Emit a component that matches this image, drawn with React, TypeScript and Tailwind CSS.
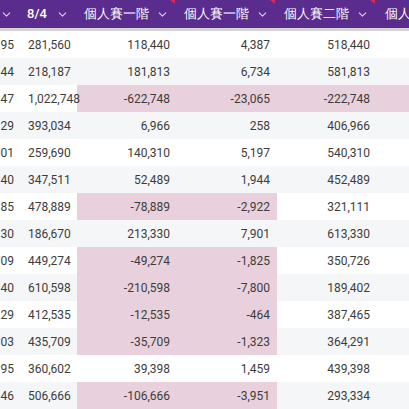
import React from 'react';
import { ChevronDown } from 'lucide-react';

type Row = { a: string; b: string; c: string; d: string; e: string; f: string; pink: number };

// pink: 0 none, 2 = cols c,d ; 4 = cols c,d,e,f
const rows: Row[] = [
  { a: '95', b: '281,560', c: '118,440', d: '4,387', e: '518,440', f: '', pink: 0 },
  { a: '44', b: '218,187', c: '181,813', d: '6,734', e: '581,813', f: '', pink: 0 },
  { a: '47', b: '1,022,748', c: '-622,748', d: '-23,065', e: '-222,748', f: '', pink: 4 },
  { a: '29', b: '393,034', c: '6,966', d: '258', e: '406,966', f: '', pink: 0 },
  { a: '01', b: '259,690', c: '140,310', d: '5,197', e: '540,310', f: '', pink: 0 },
  { a: '40', b: '347,511', c: '52,489', d: '1,944', e: '452,489', f: '', pink: 0 },
  { a: '85', b: '478,889', c: '-78,889', d: '-2,922', e: '321,111', f: '', pink: 2 },
  { a: '30', b: '186,670', c: '213,330', d: '7,901', e: '613,330', f: '', pink: 0 },
  { a: '09', b: '449,274', c: '-49,274', d: '-1,825', e: '350,726', f: '', pink: 2 },
  { a: '40', b: '610,598', c: '-210,598', d: '-7,800', e: '189,402', f: '', pink: 2 },
  { a: '29', b: '412,535', c: '-12,535', d: '-464', e: '387,465', f: '', pink: 2 },
  { a: '03', b: '435,709', c: '-35,709', d: '-1,323', e: '364,291', f: '', pink: 2 },
  { a: '95', b: '360,602', c: '39,398', d: '1,459', e: '439,398', f: '', pink: 0 },
  { a: '46', b: '506,666', c: '-106,666', d: '-3,951', e: '293,334', f: '', pink: 2 },
];

const HeadCell = ({ label, w, marker }: { label: string; w: string; marker?: boolean }) => (
  <div className={`relative flex items-center justify-between shrink-0 h-full pl-[7px] pr-[8px] ${w}`}>
    <span className="whitespace-nowrap">{label}</span>
    <ChevronDown size={13} strokeWidth={2} className="text-[#d9d0e8]" />
    {marker && (
      <div className="absolute right-[2px] top-0 w-0 h-0 border-l-[5px] border-l-transparent border-t-[4px] border-t-[#e0245e]" />
    )}
  </div>
);

const App = () => {
  return (
    <div className="w-[409px] h-[409px] overflow-hidden bg-white font-['Roboto',sans-serif] text-[12px]">
      <div className="flex h-[28px] bg-[#5a2c8e] text-white text-[13px] font-medium">
        <div className="w-[20px] shrink-0 flex items-center pl-[0px]">
          <ChevronDown size={13} strokeWidth={2} className="text-[#d9d0e8]" />
        </div>
        <HeadCell label="8/4" w="w-[57px]" />
        <HeadCell label="個人賽一階" w="w-[100px]" marker />
        <HeadCell label="個人賽一階" w="w-[100px]" marker />
        <HeadCell label="個人賽二階" w="w-[100px]" marker />
        <div className="flex-1 min-w-0 flex items-center pl-[8px] whitespace-nowrap overflow-hidden">個人</div>
      </div>
      <div className="h-[3px] bg-[#d4d4d6]" />
      {rows.map((r, i) => {
        const stripe = i % 2 === 0 ? 'bg-white' : 'bg-[#f5f6f8]';
        const p1 = r.pink >= 2 ? 'bg-[#e8d1dc]' : '';
        const p2 = r.pink >= 4 ? 'bg-[#e8d1dc]' : '';
        return (
          <div key={i} className={`flex h-[27px] items-center text-[#3c3c3c] ${stripe}`}>
            <div className="w-[20px] shrink-0 text-right pr-[6px] h-full flex items-center justify-end overflow-visible">{r.a}</div>
            <div className="w-[57px] shrink-0 pl-[8px] h-full flex items-center whitespace-nowrap overflow-visible relative z-10">{r.b}</div>
            <div className={`w-[100px] shrink-0 h-full flex items-center justify-end pr-[7px] ${p1}`}>{r.c}</div>
            <div className={`w-[100px] shrink-0 h-full flex items-center justify-end pr-[7px] ${p1}`}>{r.d}</div>
            <div className={`w-[100px] shrink-0 h-full flex items-center justify-end pr-[7px] ${p2}`}>{r.e}</div>
            <div className={`flex-1 h-full ${p2}`}>{r.f}</div>
          </div>
        );
      })}
    </div>
  );
};

export default App;
